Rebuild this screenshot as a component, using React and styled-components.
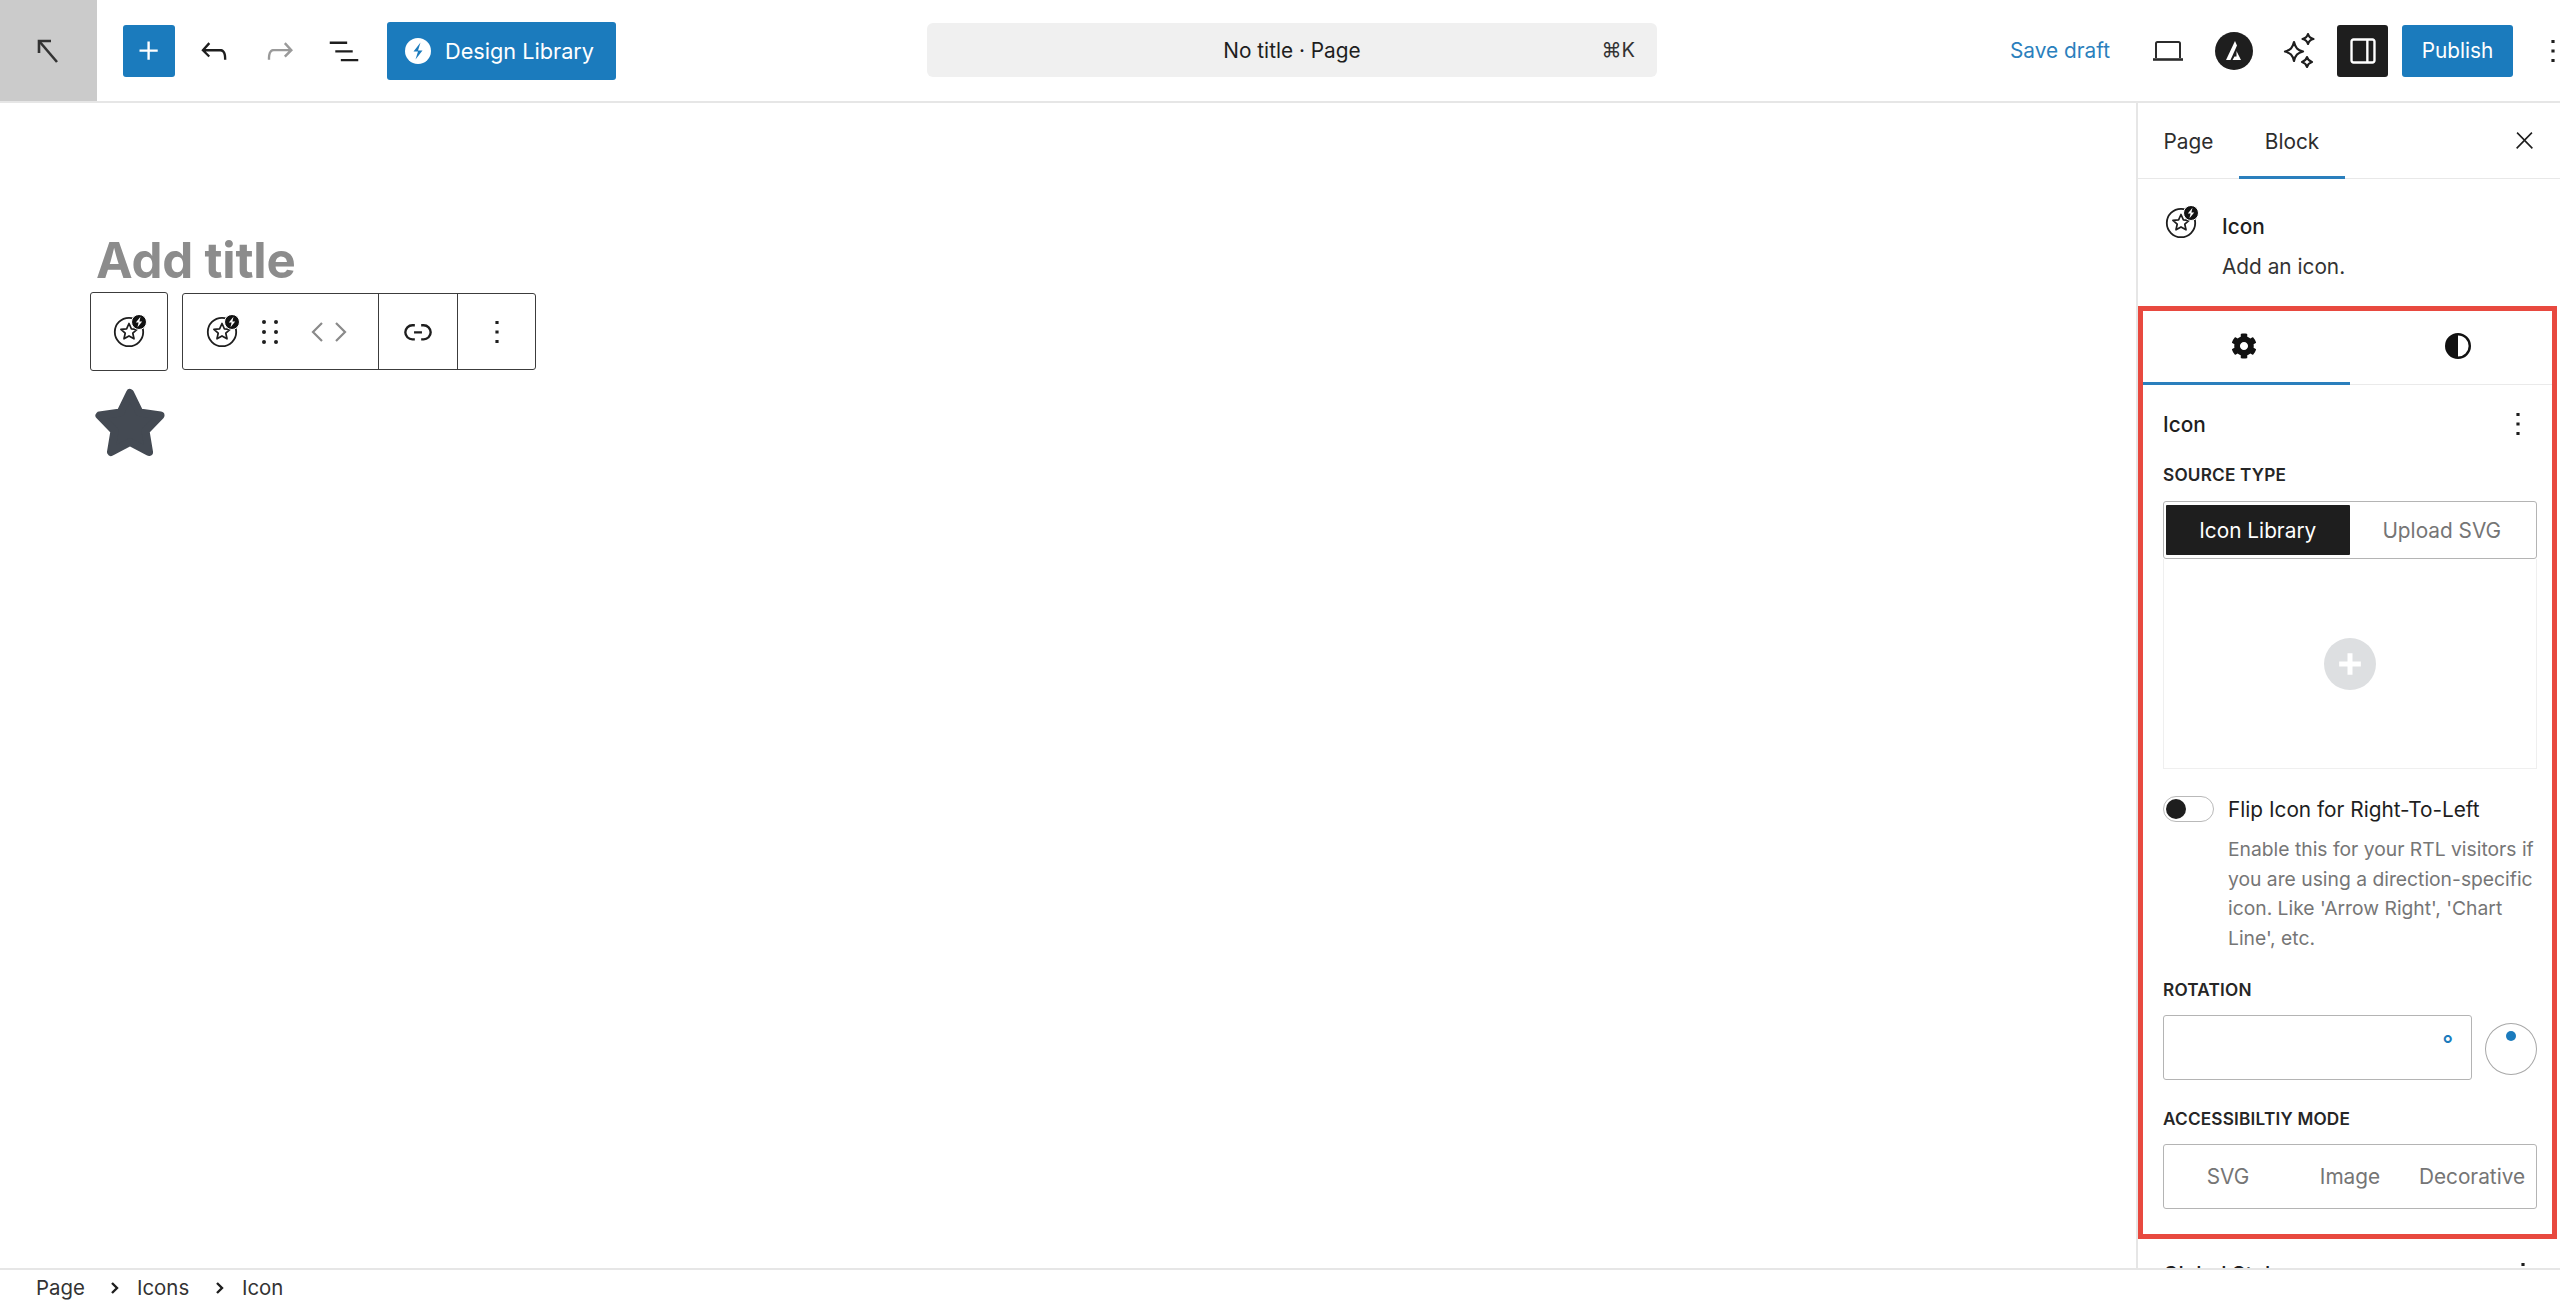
import React from 'react';
import styled, { createGlobalStyle } from 'styled-components';
import { FaCog } from 'react-icons/fa';

const blue = '#1b7bbd';
const ink = '#1e1e1e';

const GlobalStyle = createGlobalStyle`
  html, body { margin: 0; padding: 0; background: #fff; }
  body { font-family: Inter, "Noto Sans", sans-serif; color: ${ink}; }
  * { box-sizing: border-box; }
`;

const Page = styled.div`
  height: 1303px;
  display: grid;
  grid-template-rows: 103px 1165px 35px;
  overflow: hidden;
`;

const Header = styled.header`
  display: grid;
  grid-template-columns: 927px 730px 1fr;
  align-items: center;
  height: 103px;
  border-bottom: 2px solid #e6e6e6;
`;

const HeaderLeft = styled.div`
  display: flex;
  align-items: center;
  height: 101px;
`;

const BackTile = styled.div`
  width: 97px;
  height: 101px;
  background: #cbcbcb;
  display: flex;
  align-items: center;
  justify-content: center;
  margin-right: 26px;
`;

const InserterButton = styled.div`
  width: 52px;
  height: 52px;
  background: ${blue};
  border-radius: 3px;
  display: flex;
  align-items: center;
  justify-content: center;
  margin-right: 6px;
`;

const ToolIcon = styled.div`
  width: ${p => p.$w || 66}px;
  display: flex;
  align-items: center;
  justify-content: center;
  color: ${p => p.$color || ink};
  flex-shrink: 0;
`;

const LibraryButton = styled.div`
  margin-left: 12px;
  width: 229px;
  height: 58px;
  background: ${blue};
  border-radius: 3px;
  display: flex;
  align-items: center;
  gap: 14px;
  padding-left: 18px;
  color: #fff;
  font-size: 21.7px;
`;

const DocTitle = styled.div`
  height: 54px;
  background: #f0f0f0;
  border-radius: 6px;
  display: flex;
  align-items: center;
  justify-content: center;
  position: relative;
  font-size: 20.8px;
  margin-top: -1px;
`;

const Shortcut = styled.span`
  position: absolute;
  right: 22px;
  font-size: 20px;
  color: #333;
`;

const HeaderRight = styled.div`
  display: flex;
  align-items: center;
  padding-left: 353px;
`;

const SaveDraft = styled.div`
  color: #2a7fbd;
  font-size: 20.8px;
  width: 130px;
  flex-shrink: 0;
`;

const SidebarToggle = styled.div`
  width: 51px;
  height: 52px;
  margin-left: 11px;
  background: ${ink};
  border-radius: 3px;
  color: #fff;
  display: flex;
  align-items: center;
  justify-content: center;
`;

const PublishButton = styled.div`
  width: 111px;
  height: 52px;
  margin-left: 14px;
  background: ${blue};
  border-radius: 3px;
  color: #fff;
  font-size: 20.8px;
  display: flex;
  align-items: center;
  justify-content: center;
`;

const Main = styled.main`
  display: grid;
  grid-template-columns: 2136px 424px;
  overflow: hidden;
`;

const Canvas = styled.section`
  padding-top: 127px;
`;

const PostTitle = styled.h1`
  margin: 0 0 2px 96px;
  height: 60px;
  line-height: 60px;
  font-size: 49.2px;
  font-weight: 700;
  color: #8c8c8c;
  letter-spacing: -0.2px;
`;

const BlockToolbarRow = styled.div`
  display: flex;
  align-items: center;
  gap: 14px;
  margin-left: 90px;
`;

const ToolGroup = styled.div`
  display: flex;
  height: ${p => p.$h}px;
  border: 1.5px solid #3c3c3c;
  border-radius: 3px;
  background: #fff;
`;

const ToolCell = styled.div`
  width: ${p => p.$w}px;
  display: flex;
  align-items: center;
  justify-content: ${p => (p.$start ? 'flex-start' : 'center')};
  padding-left: ${p => p.$pad || 0}px;
  gap: ${p => p.$gap || 0}px;
  border-left: ${p => (p.$divided ? '1.5px solid #3c3c3c' : 'none')};
  flex-shrink: 0;
`;

const MoverSlot = styled.div`
  display: flex;
  margin-left: 12px;
`;

const StarWrap = styled.div`
  margin: 16px 0 0 94px;
  width: 72px;
  height: 70px;
`;

const Sidebar = styled.aside`
  border-left: 2px solid #e6e6e6;
  overflow: hidden;
`;

const TopTabs = styled.div`
  display: flex;
  align-items: center;
  height: 76px;
  border-bottom: 1px solid #e8e8e8;
`;

const TopTab = styled.div`
  height: 76px;
  width: ${p => p.$w}px;
  padding-top: 3px;
  display: flex;
  align-items: center;
  justify-content: center;
  font-size: 20.8px;
  color: #2d2d2d;
  border-bottom: 3px solid ${p => (p.$active ? '#2a7fbd' : 'transparent')};
  margin-bottom: -1px;
`;

const CloseSlot = styled.div`
  margin-left: auto;
  margin-right: 22px;
  display: flex;
  color: ${ink};
`;

const BlockCard = styled.div`
  height: 127px;
  padding: 27px 0 0 25px;
  display: grid;
  grid-template-columns: 59px 1fr;
  grid-template-rows: 40px 40px;
  align-items: center;
`;

const CardIcon = styled.div`
  display: flex;
  margin: -6px 0 0 -1px;
`;

const CardName = styled.div`
  font-size: 20.8px;
  font-weight: 500;
`;

const CardText = styled.div`
  font-size: 20.8px;
  grid-column: 2;
  color: #333;
`;

const Panel = styled.div`
  margin: 0 3px 0 0;
  border: 5px solid #e8493f;
  padding: 0 15px 25px 20px;
`;

const PanelTabs = styled.div`
  display: grid;
  grid-template-columns: 207px 1fr;
  height: 74px;
  margin: 0 -15px 0 -20px;
  border-bottom: 1px solid #eaeaea;
`;

const PanelTab = styled.div`
  display: flex;
  align-items: center;
  justify-content: center;
  margin-bottom: -1px;
  padding-bottom: 2px;
  padding-left: ${p => (p.$active ? 0 : 14)}px;
  padding-right: ${p => (p.$active ? 6 : 0)}px;
  border-bottom: 3px solid ${p => (p.$active ? '#2a7fbd' : 'transparent')};
`;

const TitleRow = styled.div`
  display: flex;
  align-items: center;
  justify-content: space-between;
  height: 40px;
  margin-top: 19px;
  font-size: 20.8px;
  font-weight: 500;
`;

const GlobalStylesRow = styled(TitleRow)`
  margin-top: 15px;
  padding: 0 18px 0 25px;
`;

const FieldLabel = styled.div`
  height: 20px;
  line-height: 20px;
  margin-top: ${p => p.$top}px;
  font-size: 17.2px;
  font-weight: 600;
  letter-spacing: 0.2px;
  color: #262626;
  text-transform: uppercase;
`;

const Segments = styled.div`
  display: grid;
  grid-template-columns: ${p => p.$cols};
  height: ${p => p.$h}px;
  margin-top: ${p => p.$top}px;
  padding: ${p => p.$pad};
  border: 1.5px solid #b4b4b4;
  border-radius: 3px;
`;

const Segment = styled.div`
  display: flex;
  align-items: center;
  justify-content: center;
  font-size: 20.8px;
  border-radius: 1px;
  color: ${p => (p.$active ? '#fff' : '#757575')};
  background: ${p => (p.$active ? ink : 'transparent')};
`;

const DropZone = styled.div`
  height: 210px;
  border: 1.5px solid #efefef;
  border-top: none;
  display: flex;
  align-items: center;
  justify-content: center;
`;

const AddCircle = styled.div`
  width: 52px;
  height: 52px;
  border-radius: 50%;
  background: #dddfe1;
  display: flex;
  align-items: center;
  justify-content: center;
`;

const ToggleRow = styled.div`
  display: flex;
  align-items: center;
  gap: 14px;
  margin-top: 27px;
  height: 26px;
  font-size: 20.8px;
`;

const ToggleTrack = styled.div`
  width: 51px;
  height: 26px;
  border: 1.5px solid #b9b9b9;
  border-radius: 13px;
  display: flex;
  align-items: center;
  padding-left: 2px;
`;

const ToggleKnob = styled.div`
  width: 20px;
  height: 20px;
  border-radius: 50%;
  background: ${ink};
`;

const HelpText = styled.p`
  margin: 13px 0 0 65px;
  font-size: 19.3px;
  line-height: 29.5px;
  color: #767676;
`;

const RotationRow = styled.div`
  display: flex;
  align-items: center;
  gap: 13px;
  margin-top: 15px;
`;

const RotationInput = styled.div`
  width: 310px;
  height: 65px;
  border: 1.5px solid #b4b4b4;
  border-radius: 3px;
  display: flex;
  align-items: center;
  justify-content: flex-end;
  padding: 0 18px 6px 0;
  color: ${blue};
  font-size: 24px;
  font-weight: 500;
`;

const Dial = styled.div`
  width: 52px;
  height: 52px;
  border: 1.5px solid #a8a8a8;
  border-radius: 50%;
  position: relative;
  margin-top: 2px;
`;

const DialDot = styled.div`
  position: absolute;
  top: 7px;
  left: 20px;
  width: 10px;
  height: 10px;
  border-radius: 50%;
  background: ${blue};
`;

const Breadcrumbs = styled.footer`
  border-top: 2px solid #e6e6e6;
  background: #fff;
  display: flex;
  align-items: center;
  padding: 2px 0 0 36px;
  font-size: 20.4px;
  color: #333;
`;

const Crumb = styled.span`
  width: ${p => p.$w}px;
`;

const CrumbSep = styled.span`
  width: 27px;
  display: flex;
  color: ${ink};
`;

const WpIcon = ({ d, size = 36, color = 'currentColor' }) => (
  <svg width={size} height={size} viewBox="0 0 24 24" fill={color} aria-hidden="true">
    <path d={d} />
  </svg>
);

const paths = {
  plus: 'M11 12.5V17.5H12.5V12.5H17.5V11H12.5V6H11V11H6V12.5H11Z',
  plusBold: 'M10.5 13.5V18.5H13.5V13.5H18.5V10.5H13.5V5.5H10.5V10.5H5.5V13.5Z',
  undo: 'M18.3 11.7c-.6-.6-1.4-.9-2.3-.9H6.7l2.9-3.3-1.1-1-4.5 5L8.5 16l1-1-2.7-2.7H16c.5 0 .9.2 1.3.5 1 1 1 3.4 1 4.5v.3h1.5v-.2c0-1.5 0-4.3-1.5-5.7z',
  redo: 'M15.6 6.5l-1.1 1 2.9 3.3H8c-.9 0-1.7.3-2.3.9-1.4 1.5-1.4 4.2-1.4 5.6v.2h1.5v-.3c0-1.1 0-3.5 1-4.5.3-.3.7-.5 1.3-.5h9.2L14.5 15l1.1 1.1 4.6-4.6-4.6-5z',
  list: 'M3 6h11v1.5H3V6Zm3.5 5.5h11V13h-11v-1.5ZM21 17H10v1.5h11V17Z',
  drawer: 'M18 4H6c-1.1 0-2 .9-2 2v12c0 1.1.9 2 2 2h12c1.1 0 2-.9 2-2V6c0-1.1-.9-2-2-2zm-4 14.5H6c-.3 0-.5-.2-.5-.5V6c0-.3.2-.5.5-.5h8v13zm4.5-.5c0 .3-.2.5-.5.5h-2.5v-13H18c.3 0 .5.2.5.5v12z',
  more: 'M13 19h-2v-2h2v2zm0-6h-2v-2h2v2zm0-6h-2V5h2v2z',
  link: 'M10 17.389H8.444A5.194 5.194 0 1 1 8.444 7H10v1.5H8.444a3.694 3.694 0 0 0 0 7.389H10v1.5ZM14 7h1.556a5.194 5.194 0 0 1 0 10.39H14v-1.5h1.556a3.694 3.694 0 0 0 0-7.39H14V7Zm-4.5 6h5v-1.5h-5V13Z',
  close: 'M13 11.8l6.1-6.3-1-1-6.1 6.2-6.1-6.2-1 1 6.1 6.3-6.5 6.7 1 1 6.5-6.6 6.5 6.6 1-1z',
};

const ArrowUpLeft = () => (
  <svg width="26" height="28" viewBox="0 0 26 28" fill="none" stroke="#333" strokeWidth="2.6">
    <path d="M3 16V4h12" />
    <path d="M3.5 4.5 21 25" />
  </svg>
);

const BoltBadge = () => (
  <svg width="26" height="26" viewBox="0 0 26 26">
    <circle cx="13" cy="13" r="13" fill="#fff" />
    <path d="M15.5 4.5 8.5 13.5H13L10.5 21.5 17.5 12.5H13z" fill={blue} />
  </svg>
);

const Laptop = () => (
  <svg width="34" height="24" viewBox="0 0 34 24" fill="none" stroke="#2b2b2b" strokeWidth="2">
    <path d="M5 19V4.5A1.5 1.5 0 0 1 6.5 3h21A1.5 1.5 0 0 1 29 4.5V19" />
    <path d="M2 20.5h30" strokeWidth="2.6" />
  </svg>
);

const AstraLogo = () => (
  <svg width="38" height="38" viewBox="0 0 38 38">
    <circle cx="19" cy="19" r="19" fill={ink} />
    <path d="M20 9 11 28h4.5L22 13.5z" fill="#fff" />
    <path d="M21.5 19 26 28h-8.5l2-3.5h2z" fill="#fff" />
  </svg>
);

const Sparkles = () => (
  <svg width="36" height="38" viewBox="0 0 36 38" fill="none" stroke="#1e1e1e" strokeWidth="2.2" strokeLinejoin="round">
    <path d="M13 10c1.5 6 3.5 8 9 9.5-5.5 1.5-7.5 3.5-9 9.5-1.5-6-3.5-8-9-9.5 5.5-1.5 7.5-3.5 9-9.5Z" />
    <path d="M27 2c.8 3 2 4.2 5.5 5-3.5.8-4.7 2-5.5 5-.8-3-2-4.2-5.5-5 3.500-.8 4.700-2 5.500-5Z" />
    <path d="M26 25c.8 3 1.800 4 5 5-3.200 1-4.200 2-5 5-.8-3-1.800-4-5-5 3.200-1 4.200-2 5-5Z" />
  </svg>
);

const BlockIcon = () => (
  <svg width="38" height="34" viewBox="-4 0 38 34" fill="none">
    <circle cx="15" cy="17" r="14.2" stroke="#1e1e1e" strokeWidth="1.8" />
    <path d="m15 8.5 2.4 5.3 5.7.6-4.300 3.800 1.200 5.600-5-2.900-5 2.900 1.200-5.600-4.300-3.800 5.700-.6z" stroke="#1e1e1e" strokeWidth="1.7" strokeLinejoin="round" />
    <circle cx="25" cy="7" r="7.5" fill="#111" stroke="#fff" strokeWidth="1" />
    <path d="M26.5 1.800 21.800 7.600h2.800l-1.100 4.600 4.700-5.800h-2.800z" fill="#fff" />
  </svg>
);

const DragDots = () => (
  <svg width="18" height="26" viewBox="0 0 18 26" fill="#1e1e1e">
    {[3, 13, 23].flatMap(y => [3, 15].map(x => <circle key={`${x}-${y}`} cx={x} cy={y} r="2" />))}
  </svg>
);

const MoverArrows = () => (
  <svg width="36" height="22" viewBox="0 0 36 22" fill="none" stroke="#8a8a8a" strokeWidth="2.2">
    <path d="M11 2 2 11l9 9" />
    <path d="M25 2l9 9-9 9" />
  </svg>
);

const BigStar = () => (
  <svg width="72" height="70" viewBox="0 0 72 70">
    <path
      d="M36 6 45.5 25.5 66.5 28.5 51.5 44 55 65 36 55 17 65 20.5 44 5.5 28.5 26.5 25.5Z"
      fill="#444a53"
      stroke="#444a53"
      strokeWidth="8"
      strokeLinejoin="round"
    />
  </svg>
);

const HalfCircle = () => (
  <svg width="26" height="26" viewBox="0 0 26 26">
    <circle cx="13" cy="13" r="11.8" fill="#fff" stroke="#111" strokeWidth="2.4" />
    <path d="M13 1.2a11.8 11.8 0 0 0 0 23.6z" fill="#111" />
  </svg>
);

const ChevronSmall = () => (
  <svg width="10" height="14" viewBox="0 0 10 14" fill="none" stroke="#1e1e1e" strokeWidth="2.4">
    <path d="m2 2 5 5-5 5" />
  </svg>
);

export default function App() {
  return (
    <Page>
      <GlobalStyle />
      <Header>
        <HeaderLeft>
          <BackTile>
            <ArrowUpLeft />
          </BackTile>
          <InserterButton>
            <WpIcon d={paths.plus} size={38} color="#fff" />
          </InserterButton>
          <ToolIcon>
            <WpIcon d={paths.undo} size={38} />
          </ToolIcon>
          <ToolIcon $color="#9a9a9a">
            <WpIcon d={paths.redo} size={38} />
          </ToolIcon>
          <ToolIcon $w={62}>
            <WpIcon d={paths.list} size={38} />
          </ToolIcon>
          <LibraryButton>
            <BoltBadge />
            Design Library
          </LibraryButton>
        </HeaderLeft>
        <DocTitle>
          No title · Page
          <Shortcut>⌘K</Shortcut>
        </DocTitle>
        <HeaderRight>
          <SaveDraft>Save draft</SaveDraft>
          <ToolIcon $w={56}>
            <Laptop />
          </ToolIcon>
          <ToolIcon $w={76}>
            <AstraLogo />
          </ToolIcon>
          <ToolIcon $w={54}>
            <Sparkles />
          </ToolIcon>
          <SidebarToggle>
            <WpIcon d={paths.drawer} size={38} />
          </SidebarToggle>
          <PublishButton>Publish</PublishButton>
          <ToolIcon $w={80}>
            <WpIcon d={paths.more} size={38} />
          </ToolIcon>
        </HeaderRight>
      </Header>

      <Main>
        <Canvas>
          <PostTitle>Add title</PostTitle>
          <BlockToolbarRow>
            <ToolGroup $h={79}>
              <ToolCell $w={76}>
                <BlockIcon />
              </ToolCell>
            </ToolGroup>
            <ToolGroup $h={77}>
              <ToolCell $w={195} $start $pad={20} $gap={20}>
                <BlockIcon />
                <DragDots />
                <MoverSlot>
                  <MoverArrows />
                </MoverSlot>
              </ToolCell>
              <ToolCell $w={79} $divided>
                <WpIcon d={paths.link} size={38} />
              </ToolCell>
              <ToolCell $w={78} $divided>
                <WpIcon d={paths.more} size={38} />
              </ToolCell>
            </ToolGroup>
          </BlockToolbarRow>
          <StarWrap>
            <BigStar />
          </StarWrap>
        </Canvas>

        <Sidebar>
          <TopTabs>
            <TopTab $w={101}>Page</TopTab>
            <TopTab $w={106} $active>Block</TopTab>
            <CloseSlot>
              <WpIcon d={paths.close} size={27} />
            </CloseSlot>
          </TopTabs>
          <BlockCard>
            <CardIcon>
              <BlockIcon />
            </CardIcon>
            <CardName>Icon</CardName>
            <CardText>Add an icon.</CardText>
          </BlockCard>
          <Panel>
            <PanelTabs>
              <PanelTab $active>
                <FaCog size={26} color="#111" />
              </PanelTab>
              <PanelTab>
                <HalfCircle />
              </PanelTab>
            </PanelTabs>
            <TitleRow>
              Icon
              <WpIcon d={paths.more} size={38} />
            </TitleRow>
            <FieldLabel $top={21}>Source Type</FieldLabel>
            <Segments $cols="183.5px 1fr" $h={58} $pad="3px 2px" $top={16}>
              <Segment $active>Icon Library</Segment>
              <Segment>Upload SVG</Segment>
            </Segments>
            <DropZone>
              <AddCircle>
                <WpIcon d={paths.plusBold} size={40} color="#fff" />
              </AddCircle>
            </DropZone>
            <ToggleRow>
              <ToggleTrack>
                <ToggleKnob />
              </ToggleTrack>
              Flip Icon for Right-To-Left
            </ToggleRow>
            <HelpText>
              Enable this for your RTL visitors if you are using a direction-specific icon. Like 'Arrow Right', 'Chart Line', etc.
            </HelpText>
            <FieldLabel $top={27}>Rotation</FieldLabel>
            <RotationRow>
              <RotationInput>°</RotationInput>
              <Dial>
                <DialDot />
              </Dial>
            </RotationRow>
            <FieldLabel $top={29}>Accessibiltiy Mode</FieldLabel>
            <Segments $cols="1fr 1fr 1fr" $h={65} $pad="0 3px" $top={15}>
              <Segment>SVG</Segment>
              <Segment>Image</Segment>
              <Segment>Decorative</Segment>
            </Segments>
          </Panel>
          <GlobalStylesRow>
            Global Styles
            <WpIcon d={paths.more} size={38} />
          </GlobalStylesRow>
        </Sidebar>
      </Main>

      <Breadcrumbs>
        <Crumb $w={74}>Page</Crumb>
        <CrumbSep><ChevronSmall /></CrumbSep>
        <Crumb $w={78}>Icons</Crumb>
        <CrumbSep><ChevronSmall /></CrumbSep>
        <Crumb>Icon</Crumb>
      </Breadcrumbs>
    </Page>
  );
}
